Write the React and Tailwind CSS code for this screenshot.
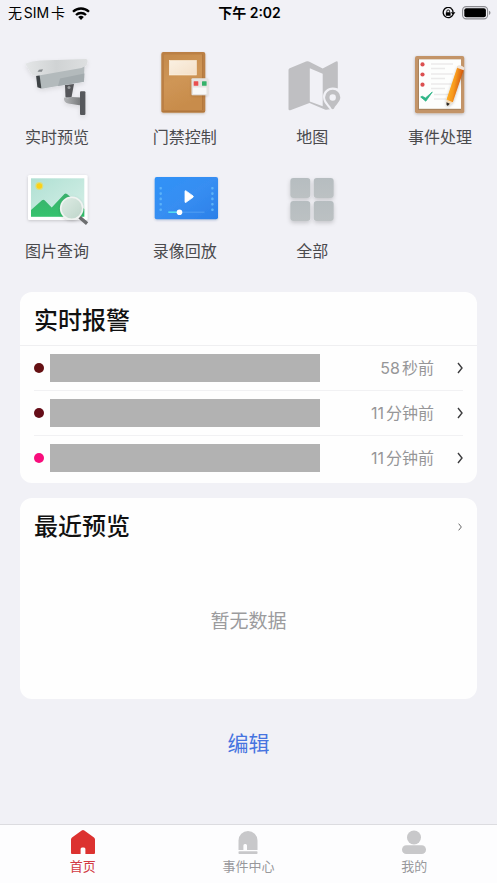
import { useState } from 'react'

function CameraIcon() {
    return (
        <svg viewBox="0 0 74 72" className="w-full h-[72px]" aria-hidden="true">
            <defs>
                <linearGradient id="camHood" x1="0" y1="0" x2="1" y2="0">
                    <stop offset="0" stopColor="#e4e6e7" />
                    <stop offset="0.5" stopColor="#d0d3d4" />
                    <stop offset="1" stopColor="#dddfe0" />
                </linearGradient>
                <linearGradient id="camArm" x1="0" y1="0" x2="1" y2="0">
                    <stop offset="0" stopColor="#b3b5b7" />
                    <stop offset="1" stopColor="#77797b" />
                </linearGradient>
                <filter id="camShadow" x="-20%" y="-20%" width="140%" height="150%">
                    <feDropShadow dx="0" dy="2" stdDeviation="2" floodColor="#000" floodOpacity="0.1" />
                </filter>
            </defs>
            <g filter="url(#camShadow)">
                <path d="M45 34l9-1-2.500 13.500h-6z" fill="#55575a" />
                <circle cx="49" cy="36.500" r="1.500" fill="#9a9c9e" />
                <path d="M44 46.500q5 1.500 8-.5l9 .5v8l-13-2q-4.500-1-4-6z" fill="url(#camArm)" />
                <rect x="60" y="40.300" width="5.400" height="23.700" rx="1" fill="#57595b" />
                <path d="M16.500 23L64.500 13.500 64 30.500 21.700 37.700z" fill="#b3babc" />
                <path d="M40 27.500L64.400 22.500 64 30.700 38 34.900z" fill="#a3abae" />
                <path d="M16 24l3.600.3L21.400 37.600 17.400 36.300z" fill="#3d4245" />
                <path d="M5.300 12.700Q12 10 20 9.500L66 8q2 .2 1.500 2.500l-1 4-5 2.500L16 25 12 23.500z" fill="url(#camHood)" />
                <path d="M17.500 20.800l1.500-2 4-.5-1.200 2.500z" fill="#85898c" />
            </g>
        </svg>
    )
}

function DoorIcon() {
    return (
        <svg viewBox="0 0 74 72" className="w-full h-[72px]" aria-hidden="true">
            <defs>
                <linearGradient id="doorFill" x1="0" y1="0" x2="0.3" y2="1">
                    <stop offset="0" stopColor="#c48a4c" />
                    <stop offset="0.5" stopColor="#cf9656" />
                    <stop offset="1" stopColor="#c88c4b" />
                </linearGradient>
                <linearGradient id="doorPlate" x1="0" y1="0" x2="1" y2="1">
                    <stop offset="0" stopColor="#faf0e2" />
                    <stop offset="1" stopColor="#f4e0c8" />
                </linearGradient>
                <filter id="doorShadow" x="-20%" y="-20%" width="140%" height="140%">
                    <feDropShadow dx="0" dy="1" stdDeviation="1.200" floodColor="#5a3510" floodOpacity="0.25" />
                </filter>
            </defs>
            <g filter="url(#doorShadow)">
                <rect x="13.300" y="1" width="44" height="60.700" rx="2" fill="#bb8045" />
                <rect x="16" y="3.500" width="38.500" height="55.500" rx="1" fill="url(#doorFill)" />
                <path d="M54.500 3.500V59M13.800 60.500h43" stroke="#ad733a" strokeWidth="0.700" />
                <rect x="21.300" y="9.500" width="27" height="14.500" fill="url(#doorPlate)" stroke="#fff6e5" strokeWidth="0.600" />
            </g>
            <g filter="url(#doorShadow)">
                <rect x="43.500" y="27.300" width="16.500" height="17" rx="1" fill="#e5e3e1" />
                <rect x="45" y="36.500" width="13.500" height="6.500" fill="#f8f8f8" />
            </g>
            <rect x="45.700" y="30.200" width="4.600" height="4.600" rx="0.500" fill="#ea4f4f" />
            <rect x="54" y="30.200" width="4.600" height="4.600" rx="0.500" fill="#34b26a" />
        </svg>
    )
}

function MapIcon() {
    return (
        <svg viewBox="0 0 74 72" className="w-full h-[72px]" aria-hidden="true">
            <path
                d="M13.500 19q0-1.200 1.200-1.700L31 10.500q1.500-.6 2.900.1L47.700 17.500 60.500 10.700q2.300-1 2.300 1V57q0 1-1 .8l-9 .7q-1.500.5-3 0L34.500 52 16 59q-2.500 1-2.500-1z"
                fill="#bfbfc2"
            />
            <path d="M34.800 17.200l12.900 5.600v32.400l-12.900-4.700z" fill="#f1f1f6" />
            <path
                d="M57.700 36.500c-5.200 0-9.700 4-9.700 9.400 0 4 2.500 7.200 4.500 9.500 2 2.300 3.500 4.600 5.200 4.600H66V39.500c-2-2-5-3-8.300-3z"
                fill="#f1f1f6"
            />
            <path
                d="M57.700 38.700a7.600 7.600 0 0 0-7.600 7.600c0 4.200 4 7 6.300 11.100q1.300 1.500 2.600 0c2.300-4.100 6.300-6.900 6.300-11.100a7.600 7.600 0 0 0-7.600-7.600z"
                fill="#bfbfc2"
            />
            <circle cx="57.700" cy="46.500" r="3.200" fill="#f1f1f6" />
        </svg>
    )
}

function EventIcon() {
    return (
        <svg viewBox="0 0 74 72" className="w-full h-[72px]" aria-hidden="true">
            <defs>
                <linearGradient id="pencilFill" x1="0" y1="0" x2="1" y2="0.350">
                    <stop offset="0.200" stopColor="#ffb429" />
                    <stop offset="0.550" stopColor="#f89a1c" />
                    <stop offset="0.850" stopColor="#d65f10" />
                </linearGradient>
                <filter id="boardShadow" x="-20%" y="-20%" width="140%" height="140%">
                    <feDropShadow dx="0" dy="1" stdDeviation="1.500" floodColor="#000" floodOpacity="0.25" />
                </filter>
            </defs>
            <g filter="url(#boardShadow)">
                <rect x="12" y="5" width="49.300" height="57.300" rx="2" fill="#c39468" />
            </g>
            <rect x="15" y="8" width="43" height="51" fill="#a9835d" />
            <rect x="16" y="8.300" width="42" height="49.500" fill="#fdfefd" />
            <g fill="#db4f50">
                <circle cx="19.500" cy="13.400" r="2.100" />
                <circle cx="19.500" cy="23.500" r="2.100" />
                <circle cx="19.500" cy="33.700" r="2.100" />
            </g>
            <path d="M28 13h22M28 17.500h14M28 23h22M28 27.500h14M28 33h22M28 37.500h14M31 43.500h18M31 48h12" stroke="#ebeaea" strokeWidth="1.500" />
            <path d="M17.700 46l1.500-.8 3.300 1.800 6.800-6-6.500 9.200z" fill="#2eb586" stroke="#2eb586" strokeWidth="0.800" strokeLinejoin="round" />
            <g filter="url(#boardShadow)">
                <path d="M43.500 48L50.200 50.500 45.500 54.500q-1.700.7-1.900-1z" fill="#f3d9b4" />
                <path d="M54.500 15.500L61 18.200 49.800 51.200 43.500 48.500z" fill="url(#pencilFill)" />
            </g>
            <path d="M55 14.500q3.500-1 6.500 2.300l-.8 2.400-6.700-2.500z" fill="#efe5dc" />
            <path d="M43.500 51.200l3.300 1.500-1.600 1.800q-1.600.6-1.700-1z" fill="#282828" />
        </svg>
    )
}

function PictureIcon() {
    return (
        <svg viewBox="0 0 74 72" className="w-full h-[72px]" aria-hidden="true">
            <defs>
                <linearGradient id="picSky" x1="0" y1="0" x2="1" y2="1">
                    <stop offset="0" stopColor="#b0e0d3" />
                    <stop offset="1" stopColor="#d6f0e8" />
                </linearGradient>
                <linearGradient id="picHill" x1="0" y1="0" x2="0" y2="1">
                    <stop offset="0" stopColor="#39b06c" />
                    <stop offset="1" stopColor="#36c36e" />
                </linearGradient>
                <linearGradient id="picLens" x1="0" y1="0" x2="1" y2="1">
                    <stop offset="0" stopColor="#dfece5" />
                    <stop offset="1" stopColor="#bdd5c9" />
                </linearGradient>
                <filter id="picShadow" x="-20%" y="-20%" width="140%" height="140%">
                    <feDropShadow dx="0" dy="1" stdDeviation="1.500" floodColor="#000" floodOpacity="0.18" />
                </filter>
            </defs>
            <rect x="8" y="10" width="59.500" height="45" rx="1.500" fill="#fff" filter="url(#picShadow)" />
            <rect x="11" y="13.300" width="53.300" height="38.400" fill="url(#picSky)" />
            <path d="M11 45l11-9.700q1.300-1 2.600 0l7.100 7.200L44.400 29q1.300-1 2.600 0L64.300 44v7.700H11z" fill="url(#picHill)" />
            <circle cx="19.300" cy="21" r="4" fill="#f4dc45" opacity="0.600" />
            <circle cx="19.300" cy="21" r="2.800" fill="#fcd116" />
            <path d="M60.800 53.200l5 4.300" stroke="#6d6f70" strokeWidth="3.400" strokeLinecap="square" />
            <circle cx="51.700" cy="43.300" r="11" fill="url(#picLens)" stroke="#f0f3f1" strokeWidth="1.600" filter="url(#picShadow)" />
        </svg>
    )
}

function PlaybackIcon() {
    return (
        <svg viewBox="0 0 74 72" className="w-full h-[72px]" aria-hidden="true">
            <defs>
                <linearGradient id="videoFill" x1="0" y1="0" x2="1" y2="1">
                    <stop offset="0" stopColor="#2f92f7" />
                    <stop offset="0.500" stopColor="#378ef2" />
                    <stop offset="1" stopColor="#2b7fe8" />
                </linearGradient>
                <filter id="videoShadow" x="-20%" y="-20%" width="140%" height="140%">
                    <feDropShadow dx="0" dy="1" stdDeviation="1.200" floodColor="#1c3f80" floodOpacity="0.25" />
                </filter>
            </defs>
            <rect x="6.700" y="12" width="63.300" height="42.300" rx="2" fill="url(#videoFill)" filter="url(#videoShadow)" />
            {[22, 27.3, 32.6, 38, 43.4].map((y) => (
                <g key={y} fill="#5cb2f8">
                    <rect x="11.500" y={y} width="2.400" height="2.600" rx="0.800" />
                    <rect x="63.200" y={y} width="2.400" height="2.600" rx="0.800" />
                </g>
            ))}
            <path d="M37 26.300q0-1 1-.4l7 5q.8.7 0 1.400l-7 5q-1 .6-1-.4z" fill="#fff" stroke="#fff" strokeWidth="0.800" />
            <path d="M32 47.200h24.500" stroke="#4d9bf2" strokeWidth="1.200" />
            <path d="M20.300 47.200H31" stroke="#53dcf0" strokeWidth="1.600" />
            <circle cx="31.500" cy="47.200" r="2.800" fill="#fff" />
        </svg>
    )
}

function AllIcon() {
    return (
        <svg viewBox="0 0 74 72" className="w-full h-[72px]" aria-hidden="true">
            <defs>
                <linearGradient id="tileFill" x1="0" y1="0" x2="0" y2="1">
                    <stop offset="0" stopColor="#b6bdc0" />
                    <stop offset="1" stopColor="#bcc1c3" />
                </linearGradient>
                <filter id="tileShadow" x="-20%" y="-20%" width="140%" height="150%">
                    <feDropShadow dx="0" dy="2" stdDeviation="2" floodColor="#000" floodOpacity="0.18" />
                </filter>
            </defs>
            <g fill="url(#tileFill)" filter="url(#tileShadow)">
                <rect x="15.300" y="13" width="20" height="20" rx="3" />
                <rect x="38.700" y="13" width="20" height="20" rx="3" />
                <rect x="15.300" y="36" width="20" height="20" rx="3" />
                <rect x="38.700" y="36" width="20" height="20" rx="3" />
            </g>
        </svg>
    )
}

function HomeTabIcon() {
    return (
        <svg viewBox="0 0 24 24" className="size-6" fill="currentColor" aria-hidden="true">
            <path d="M10.700.5q1.300-1 2.600 0l9.700 7q1 .8 1 2V23q0 1-1 1h-8.600v-5q0-1.600-1.400-1.600h-2q-1.400 0-1.400 1.600v5H1q-1 0-1-1V9.500q0-1.200 1-2z" />
        </svg>
    )
}

function AlarmTabIcon() {
    return (
        <svg viewBox="0 0 24 24" className="size-6" fill="currentColor" aria-hidden="true">
            <path d="M2.500 10.500a9.500 9.500 0 0 1 19 0V20H11v-4.500q0-1.500-1.400-1.500h-.8q-1.400 0-1.400 1.500V20H2.500z" />
            <rect x="2.500" y="21.200" width="19" height="2.800" rx="0.800" />
        </svg>
    )
}

function MineTabIcon() {
    return (
        <svg viewBox="0 0 24 24" className="size-6" fill="currentColor" aria-hidden="true">
            <circle cx="12" cy="7.500" r="7" />
            <rect y="15.300" width="24" height="8.700" rx="4.300" />
        </svg>
    )
}

function Chevron({ className }) {
    return (
        <svg viewBox="0 0 6 12" className={className} fill="none" stroke="currentColor" aria-hidden="true">
            <path d="M1 1l4 5-4 5" strokeWidth="1.400" />
        </svg>
    )
}

function StatusBar() {
    return (
        <header className="grid grid-cols-3 items-center h-[26px] pl-2 pr-1.5 text-black text-sm leading-5">
            <div className="flex items-center gap-[7px]">
                <span>无SIM卡</span>
                <svg viewBox="0 0 18 13" className="w-[18px] h-[13px]" aria-hidden="true">
                    <g fill="none" stroke="#000" strokeWidth="2.300">
                        <path d="M1 4.800a11.400 11.400 0 0 1 16 0" />
                        <path d="M4 8a7.200 7.200 0 0 1 10 0" />
                    </g>
                    <path d="M6.200 10a4 4 0 0 1 5.600 0L9 13z" />
                </svg>
            </div>
            <div className="text-center font-semibold">下午 2:02</div>
            <div className="flex items-center justify-end gap-1.5">
                <svg viewBox="0 0 14 12" className="w-3.5 h-3" aria-hidden="true">
                    <path d="M9.500 1.500A5.100 5.100 0 1 0 11 7.500" fill="none" stroke="#000" strokeWidth="1.300" />
                    <path d="M9.300 1.400a5.100 5.100 0 0 1 1.800 4" fill="none" stroke="#000" strokeWidth="1.300" />
                    <path d="M8.800 5.200h4.600L11.100 8.200z" />
                    <rect x="3.800" y="5.300" width="4.800" height="3.500" rx="0.500" />
                    <path d="M4.800 5.500V4.300a1.400 1.400 0 0 1 2.800 0v1.200" fill="none" stroke="#000" strokeWidth="0.900" />
                </svg>
                <svg viewBox="0 0 29 14" className="w-[29px] h-3.5" aria-hidden="true">
                    <rect x="0.600" y="0.600" width="25" height="12.300" rx="3.600" fill="none" stroke="#8b8b90" strokeWidth="1.100" />
                    <rect x="2.300" y="2.300" width="21.600" height="8.900" rx="2" />
                    <path d="M27 4.700q1.500.7 1.500 2.100T27 8.900z" fill="#8b8b90" />
                </svg>
            </div>
        </header>
    )
}

const shortcuts = [
    { label: '实时预览', icon: CameraIcon },
    { label: '门禁控制', icon: DoorIcon },
    { label: '地图', icon: MapIcon },
    { label: '事件处理', icon: EventIcon },
    { label: '图片查询', icon: PictureIcon },
    { label: '录像回放', icon: PlaybackIcon },
    { label: '全部', icon: AllIcon },
]

const alarms = [
    { time: '58秒前', dot: 'bg-[#651013]' },
    { time: '11分钟前', dot: 'bg-[#650d18]' },
    { time: '11分钟前', dot: 'bg-[#f80d7c]' },
]

const tabs = [
    { id: 'home', label: '首页', icon: HomeTabIcon },
    { id: 'events', label: '事件中心', icon: AlarmTabIcon },
    { id: 'mine', label: '我的', icon: MineTabIcon },
]

export default function App() {
    const [tab, setTab] = useState('home')

    return (
        <div className="min-h-screen flex flex-col bg-[#f1f1f6] font-[Inter,'Noto_Sans_CJK_SC',sans-serif] [text-autospace:normal]">
            <StatusBar />

            <main className="flex-1 px-5 pt-[25px]">
                {/* Shortcuts */}
                <div className="grid grid-cols-[repeat(4,74px)] justify-between gap-y-3.5">
                    {shortcuts.map((item) => (
                        <button key={item.label} className="flex flex-col items-center">
                            <item.icon />
                            <span className="text-base leading-7 text-[#4a4a4d]">{item.label}</span>
                        </button>
                    ))}
                </div>

                {/* Realtime alarms */}
                <section className="mt-[27px] pb-[3px] rounded-xl bg-[#fefefe]">
                    <h2 className="h-[54px] px-3.5 pt-1 flex items-center border-b border-[#efeff1] text-2xl font-medium text-[#111]">
                        实时报警
                    </h2>
                    <ul className="px-3.5">
                        {alarms.map((alarm, i) => (
                            <li key={i} className="border-b border-[#f1f1f3] last:border-b-0">
                                <button className="w-full h-11 flex items-center text-left">
                                    <span className={`size-2.5 rounded-full ${alarm.dot}`}></span>
                                    <span className="ml-1.5 w-[270px] h-7 bg-[#b2b2b2]"></span>
                                    <span className="ml-auto text-base text-[#969698]">{alarm.time}</span>
                                    <Chevron className="ml-[23px] w-1.5 h-3 text-[#3c3c3e]" />
                                </button>
                            </li>
                        ))}
                    </ul>
                </section>

                {/* Recent previews */}
                <section className="mt-[15px] rounded-xl bg-[#fefefe]">
                    <button className="w-full h-[58px] px-3.5 flex items-center justify-between">
                        <h2 className="text-2xl font-medium text-[#111]">最近预览</h2>
                        <Chevron className="w-1.5 h-2 text-[#5c5c5e]" />
                    </button>
                    <p className="pt-[52px] pb-[63px] text-center text-[19px] leading-7 text-[#9b9b9d]">暂无数据</p>
                </section>

                <div className="mt-[29px] flex justify-center">
                    <button className="text-[21px] leading-8 text-[#4674e0]">编辑</button>
                </div>
            </main>

            {/* Tab bar */}
            <nav className="grid grid-cols-3 h-[59px] border-t border-[#dcdce0] bg-[#fdfdfe]">
                {tabs.map((item) => (
                    <button
                        key={item.id}
                        onClick={() => setTab(item.id)}
                        className={`pt-[5px] flex flex-col items-center ${tab === item.id ? 'text-[#dc3230]' : 'text-[#c8c8ca]'}`}
                    >
                        <item.icon />
                        <span className={`mt-0.5 text-[13px] leading-5 ${tab === item.id ? 'text-[#d23a42]' : 'text-[#98989b]'}`}>
                            {item.label}
                        </span>
                    </button>
                ))}
            </nav>
        </div>
    )
}
